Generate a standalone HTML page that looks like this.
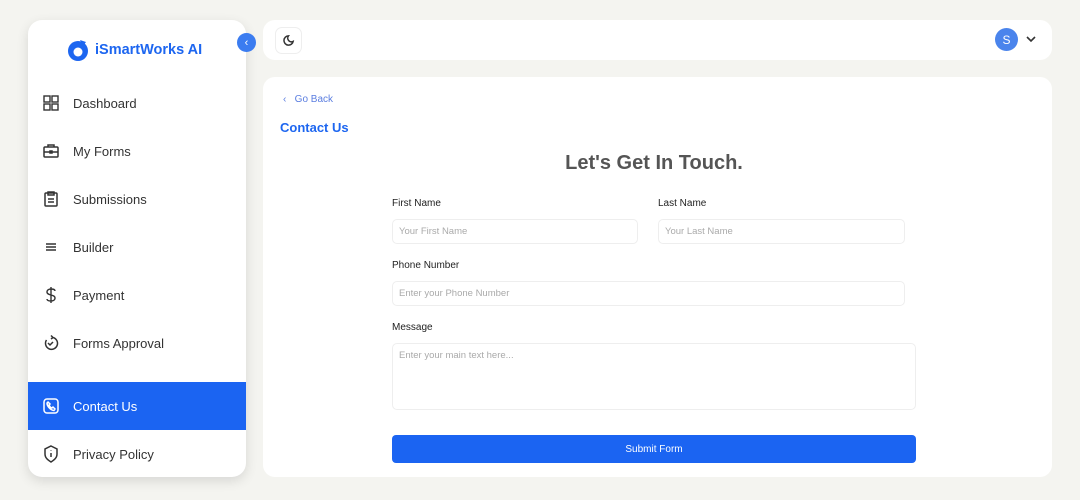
<!DOCTYPE html>
<html><head><style>
*{box-sizing:border-box;margin:0;padding:0}
body{width:1080px;height:500px;background:#f4f4f0;font-family:"Liberation Sans",sans-serif;position:relative;overflow:hidden}
.side{position:absolute;left:28px;top:20px;width:218px;height:457px;background:#fff;border-radius:14px;box-shadow:0 4px 12px rgba(0,0,0,.12);overflow:hidden}
.logo{position:absolute;left:38px;top:18px;display:flex;align-items:center;gap:5px;color:#1d66f0;font-weight:bold;font-size:14.5px}
.item{position:absolute;left:0;width:218px;height:48px;display:flex;align-items:center;font-size:13px;color:#333}
.item svg{position:absolute;left:14px}
.item span{position:absolute;left:45px}
.item.act{background:#1b64f2;color:#fff}
.tog{position:absolute;left:237px;top:33px;width:19px;height:19px;border-radius:50%;background:#3b7cf0;color:#fff;font-size:11px;display:flex;align-items:center;justify-content:center}
.top{position:absolute;left:263px;top:20px;width:789px;height:40px;background:#fff;border-radius:12px}
.moon{position:absolute;left:12px;top:7px;width:27px;height:27px;border:1px solid #eee;border-radius:7px;display:flex;align-items:center;justify-content:center}
.av{position:absolute;left:732px;top:8px;width:23px;height:23px;border-radius:50%;background:#4a84ec;color:#fff;font-size:12px;display:flex;align-items:center;justify-content:center}
.main{position:absolute;left:263px;top:77px;width:789px;height:400px;background:#fff;border-radius:12px}
.lbl{position:absolute;font-size:10px;color:#222}
.inp{position:absolute;border:1px solid #eee;border-radius:5px;font-size:9.5px;color:#aaa;padding-left:6px;display:flex;align-items:center}
</style></head><body>
<div class="side">
 <div class="logo"><svg width="24" height="24" viewBox="0 0 24 24"><circle cx="12" cy="13" r="10" fill="#1d66f0"/><circle cx="12" cy="14" r="4.5" fill="#fff"/><path d="M14 2l6 2-3 4z" fill="#1d66f0"/></svg>iSmartWorks AI</div>
 <div class="item" style="top:59px"><svg width="18" height="18" viewBox="0 0 18 18" fill="none" stroke="#333" stroke-width="1.4"><rect x="2" y="2" width="6" height="6"/><rect x="10" y="2" width="6" height="6"/><rect x="2" y="10" width="6" height="6"/><rect x="10" y="10" width="6" height="6"/></svg><span>Dashboard</span></div>
 <div class="item" style="top:107px"><svg width="18" height="18" viewBox="0 0 18 18" fill="none" stroke="#333" stroke-width="1.5"><rect x="2" y="5" width="14" height="10" rx="1"/><path d="M6 5V3h6v2M2 10h14M8 9h2v2H8z"/></svg><span>My Forms</span></div>
 <div class="item" style="top:155px"><svg width="18" height="18" viewBox="0 0 18 18" fill="none" stroke="#333" stroke-width="1.5"><rect x="3" y="3" width="12" height="13" rx="1"/><path d="M6 2h6v3H6zM6 9h6M6 12h6"/></svg><span>Submissions</span></div>
 <div class="item" style="top:203px"><svg width="18" height="18" viewBox="0 0 18 18" stroke="#333" stroke-width="1.6"><path d="M4 6h10M4 9h10M4 12h10"/></svg><span>Builder</span></div>
 <div class="item" style="top:251px"><svg width="18" height="18" viewBox="0 0 18 18" fill="none" stroke="#333" stroke-width="1.4"><path d="M9 1v16M13 5c0-1.5-2-2-4-2s-4 1-4 3 2 2.5 4 3 4 1 4 3-2 3-4 3-4-.5-4-2"/></svg><span>Payment</span></div>
 <div class="item" style="top:299px"><svg width="18" height="18" viewBox="0 0 18 18" fill="none" stroke="#333" stroke-width="1.5"><path d="M11 3.5a6 6 0 1 1-6.5 2.5M9 1.5l2 2-2 1.5M6 9l2 2 3-3"/></svg><span>Forms Approval</span></div>
 <div class="item act" style="top:362px"><svg width="18" height="18" viewBox="0 0 18 18" fill="none" stroke="#fff" stroke-width="1.5"><rect x="2" y="2" width="14" height="14" rx="3"/><path d="M6 5l2 2-1 1c1 2 2 3 3 3l1-1 2 2-1 1.5C8 13 5 9 5 6z"/></svg><span>Contact Us</span></div>
 <div class="item" style="top:410px"><svg width="18" height="18" viewBox="0 0 18 18" fill="none" stroke="#333" stroke-width="1.5"><path d="M9 1l6 3v5c0 4-3 6-6 8-3-2-6-4-6-8V4z"/><path d="M9 8v4M9 5.5v.5"/></svg><span>Privacy Policy</span></div>
</div>
<div class="tog">‹</div>
<div class="top">
 <div class="moon"><svg width="13" height="13" viewBox="0 0 14 14" fill="none" stroke="#333" stroke-width="1.6"><path d="M7 2a5 5 0 1 0 5 6 4 4 0 0 1-5-6z"/></svg></div>
 <div class="av">S</div>
 <svg style="position:absolute;left:763px;top:15px" width="10" height="8" viewBox="0 0 10 8" fill="none" stroke="#333" stroke-width="1.6"><path d="M1 2l4 4 4-4"/></svg>
</div>
<div class="main">
 <div style="position:absolute;left:20px;top:17px;font-size:10px;color:#5b7ee0">‹&nbsp;&nbsp;&nbsp;Go Back</div>
 <div style="position:absolute;left:17px;top:43px;font-size:13px;font-weight:bold;color:#1d66f0">Contact Us</div>
 <div style="position:absolute;left:0;width:782px;top:75px;text-align:center;font-size:20px;font-weight:bold;color:#555">Let's Get In Touch.</div>
 <div class="lbl" style="left:129px;top:121px">First Name</div>
 <div class="lbl" style="left:395px;top:121px">Last Name</div>
 <div class="inp" style="left:129px;top:142px;width:246px;height:25px">Your First Name</div>
 <div class="inp" style="left:395px;top:142px;width:247px;height:25px">Your Last Name</div>
 <div class="lbl" style="left:129px;top:183px">Phone Number</div>
 <div class="inp" style="left:129px;top:204px;width:513px;height:25px">Enter your Phone Number</div>
 <div class="lbl" style="left:129px;top:245px">Message</div>
 <div class="inp" style="left:129px;top:266px;width:524px;height:67px;align-items:flex-start;padding-top:6px">Enter your main text here...</div>
 <div style="position:absolute;left:129px;top:358px;width:524px;height:28px;background:#1b64f2;border-radius:4px;color:#fff;font-size:10px;display:flex;align-items:center;justify-content:center">Submit Form</div>
</div>
</body></html>
